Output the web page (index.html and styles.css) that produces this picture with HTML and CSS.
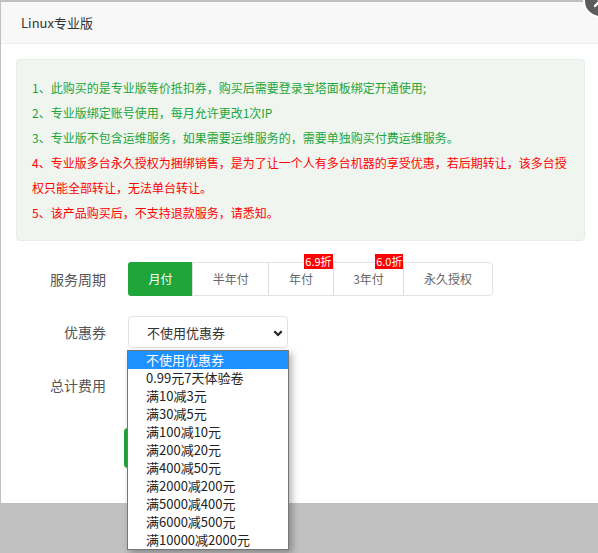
FILE: index.html
```html
<!DOCTYPE html>
<html lang="zh-CN">
<head>
<meta charset="utf-8">
<title>Linux专业版</title>
<link rel="stylesheet" href="styles.css">
</head>
<body>
<div class="layer">
  <div class="layer-title">Linux专业版</div>
  <span class="layer-close">
    <svg width="14" height="14" viewBox="0 0 14 14"><path d="M2 2 L12 12 M12 2 L2 12" stroke="#fff" stroke-width="2.4" stroke-linecap="round"/></svg>
  </span>
  <div class="layer-content">
    <ul class="notice">
      <li class="green">1、此购买的是专业版等价抵扣券，购买后需要登录宝塔面板绑定开通使用;</li>
      <li class="green">2、专业版绑定账号使用，每月允许更改1次IP</li>
      <li class="green">3、专业版不包含运维服务，如果需要运维服务的，需要单独购买付费运维服务。</li>
      <li class="red">4、专业版多台永久授权为捆绑销售，是为了让一个人有多台机器的享受优惠，若后期转让，该多台授权只能全部转让，无法单台转让。</li>
      <li class="red">5、该产品购买后，不支持退款服务，请悉知。</li>
    </ul>
    <div class="form-row row-cycle">
      <span class="label">服务周期</span>
      <div class="tabs">
        <span class="tab active">月付</span>
        <span class="tab">半年付</span>
        <span class="tab">年付<em class="badge">6.9折</em></span>
        <span class="tab">3年付<em class="badge">6.0折</em></span>
        <span class="tab">永久授权</span>
      </div>
    </div>
    <div class="form-row row-coupon">
      <span class="label">优惠券</span>
      <div class="select-wrap">
        <div class="select">
          <span>不使用优惠券</span>
          <svg class="chev" width="10" height="7" viewBox="0 0 10 7"><path d="M1.3 1.3 L5 5 L8.7 1.3" fill="none" stroke="#222" stroke-width="2.2"/></svg>
        </div>
        <ul class="dropdown">
          <li class="sel">不使用优惠券</li>
          <li>0.99元7天体验卷</li>
          <li>满10减3元</li>
          <li>满30减5元</li>
          <li>满100减10元</li>
          <li>满200减20元</li>
          <li>满400减50元</li>
          <li>满2000减200元</li>
          <li>满5000减400元</li>
          <li>满6000减500元</li>
          <li>满10000减2000元</li>
        </ul>
      </div>
    </div>
    <div class="form-row row-total">
      <span class="label">总计费用</span>
    </div>
    <div class="row-btn">
      <button class="buy" aria-label="立即购买"></button>
    </div>
  </div>
</div>
</body>
</html>
```
FILE: styles.css
```css
html, body {
  margin: 0;
  padding: 0;
}
body {
  background: #c0c0c0;
  width: 598px;
  height: 553px;
  overflow: hidden;
  font-family: "Noto Sans CJK SC", "Noto Sans", sans-serif;
  padding-top: 2px;
  box-sizing: border-box;
}
.layer {
  position: relative;
  margin-left: 1px;
  width: 600px;
  height: 501px;
  background: #fff;
}
.layer-title {
  height: 41px;
  line-height: 41px;
  padding-left: 20px;
  background: #f8f8f8;
  border-bottom: 1px solid #eee;
  color: #333;
  font-size: 13px;
}
.layer-close {
  position: absolute;
  left: 582px;
  top: -18px;
  width: 30px;
  height: 30px;
  border: 2px solid #fff;
  border-radius: 50%;
  background: #5c5c5c;
  display: flex;
  align-items: center;
  justify-content: center;
}
.layer-content {
  padding: 15px 16px 0 15px;
}
.notice {
  list-style: none;
  margin: 0;
  padding: 15px;
  width: 537px;
  background: #f0f6ef;
  border: 1px solid #e6ede5;
  border-radius: 4px;
  font-size: 12px;
  line-height: 25px;
}
.notice .green { color: #20a53a; }
.notice .red { color: #ff0000; }
.form-row {
  display: flex;
  align-items: center;
}
.label {
  width: 90px;
  margin-right: 22px;
  text-align: right;
  font-size: 14px;
  color: #555;
  flex: none;
}
.row-cycle {
  margin-top: 21px;
  height: 34px;
}
.tabs {
  display: flex;
  height: 34px;
  box-sizing: border-box;
  border: 1px solid #e2e2e2;
  border-radius: 4px;
}
.tab {
  position: relative;
  padding: 0 19.6px;
  line-height: 32px;
  font-size: 12px;
  color: #666;
  border-left: 1px solid #ddd;
}
.tab:first-child {
  border-left: none;
}
.tab.active {
  background: #20a53a;
  color: #fff;
  border-radius: 3px 0 0 3px;
  margin: -1px 0 -1px -1px;
  padding: 1px 19.6px 1px 20.6px;
}
.badge {
  position: absolute;
  top: -9px;
  right: 0;
  background: #ff0000;
  color: #fff;
  font-style: normal;
  font-size: 11px;
  line-height: 15px;
  padding: 0 1px;
}
.row-coupon {
  margin-top: 20px;
  height: 32px;
}
.select-wrap {
  position: relative;
}
.select {
  width: 160px;
  height: 32px;
  box-sizing: border-box;
  border: 1px solid #e2e2e2;
  border-radius: 4px;
  padding-left: 18px;
  display: flex;
  align-items: center;
  font-size: 13px;
  color: #333;
  position: relative;
}
.chev {
  position: absolute;
  right: 4px;
  top: 13px;
}
.dropdown {
  position: absolute;
  z-index: 5;
  left: -1px;
  top: 34px;
  width: 160px;
  margin: 0;
  padding: 0;
  list-style: none;
  background: #fff;
  border: 1px solid #767676;
  box-shadow: 3px 3px 7px rgba(0,0,0,0.3);
}
.dropdown li {
  height: 18px;
  line-height: 18px;
  padding-left: 18px;
  font-size: 13px;
  color: #222;
  white-space: nowrap;
}
.dropdown li.sel {
  background: #1e90ff;
  color: #fff;
}
.row-total {
  margin-top: 21px;
  height: 32px;
}
.row-btn {
  margin-top: 27px;
  padding-left: 108px;
}
.buy {
  width: 120px;
  height: 40px;
  border: none;
  border-radius: 4px;
  background: #20a53a;
  color: #fff;
  font-size: 14px;
  font-family: inherit;
}
```
